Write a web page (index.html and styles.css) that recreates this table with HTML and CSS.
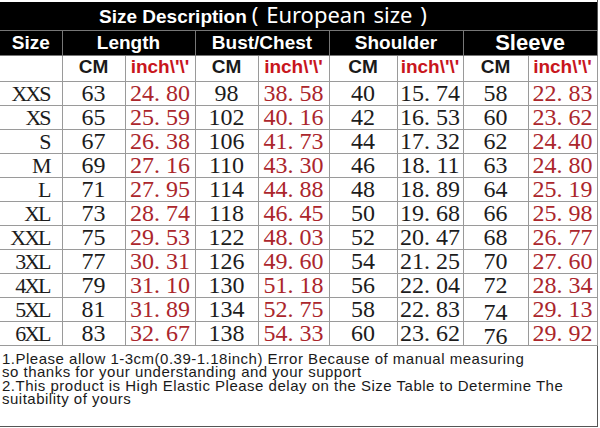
FILE: index.html
```html
<!DOCTYPE html>
<html>
<head>
<meta charset="utf-8">
<link rel="stylesheet" href="styles.css">
</head>
<body>
<div class="sheet">
<table class="chart">
<colgroup>
<col class="c0"><col class="c1"><col class="c2"><col class="c3"><col class="c4"><col class="c5"><col class="c6"><col class="c7"><col class="c8">
</colgroup>
<thead>
<tr class="title"><th colspan="9"><span class="t1">Size Description</span><span class="t2">( European size )</span></th></tr>
<tr class="head"><th>Size</th><th colspan="2">Length</th><th colspan="2">Bust/Chest</th><th colspan="2">Shoulder</th><th colspan="2" class="big">Sleeve</th></tr>
<tr class="units"><th></th><th>CM</th><th class="rd">inch\'\'</th><th>CM</th><th class="rd">inch\'\'</th><th>CM</th><th class="rd">inch\'\'</th><th>CM</th><th class="rd">inch\'\'</th></tr>
</thead>
<tbody>
<tr><td class="sz">XXS</td><td>63</td><td class="in">24<span class="dp">.</span>80</td><td>98</td><td class="in">38<span class="dp">.</span>58</td><td>40</td><td class="inb">15<span class="dp">.</span>74</td><td>58</td><td class="in">22<span class="dp">.</span>83</td></tr>
<tr><td class="sz">XS</td><td>65</td><td class="in">25<span class="dp">.</span>59</td><td>102</td><td class="in">40<span class="dp">.</span>16</td><td>42</td><td class="inb">16<span class="dp">.</span>53</td><td>60</td><td class="in">23<span class="dp">.</span>62</td></tr>
<tr><td class="sz">S</td><td>67</td><td class="in">26<span class="dp">.</span>38</td><td>106</td><td class="in">41<span class="dp">.</span>73</td><td>44</td><td class="inb">17<span class="dp">.</span>32</td><td>62</td><td class="in">24<span class="dp">.</span>40</td></tr>
<tr><td class="sz">M</td><td>69</td><td class="in">27<span class="dp">.</span>16</td><td>110</td><td class="in">43<span class="dp">.</span>30</td><td>46</td><td class="inb">18<span class="dp">.</span>11</td><td>63</td><td class="in">24<span class="dp">.</span>80</td></tr>
<tr><td class="sz">L</td><td>71</td><td class="in">27<span class="dp">.</span>95</td><td>114</td><td class="in">44<span class="dp">.</span>88</td><td>48</td><td class="inb">18<span class="dp">.</span>89</td><td>64</td><td class="in">25<span class="dp">.</span>19</td></tr>
<tr><td class="sz">XL</td><td>73</td><td class="in">28<span class="dp">.</span>74</td><td>118</td><td class="in">46<span class="dp">.</span>45</td><td>50</td><td class="inb">19<span class="dp">.</span>68</td><td>66</td><td class="in">25<span class="dp">.</span>98</td></tr>
<tr><td class="sz">XXL</td><td>75</td><td class="in">29<span class="dp">.</span>53</td><td>122</td><td class="in">48<span class="dp">.</span>03</td><td>52</td><td class="inb">20<span class="dp">.</span>47</td><td>68</td><td class="in">26<span class="dp">.</span>77</td></tr>
<tr><td class="sz">3XL</td><td>77</td><td class="in">30<span class="dp">.</span>31</td><td>126</td><td class="in">49<span class="dp">.</span>60</td><td>54</td><td class="inb">21<span class="dp">.</span>25</td><td>70</td><td class="in">27<span class="dp">.</span>60</td></tr>
<tr><td class="sz">4XL</td><td>79</td><td class="in">31<span class="dp">.</span>10</td><td>130</td><td class="in">51<span class="dp">.</span>18</td><td>56</td><td class="inb">22<span class="dp">.</span>04</td><td>72</td><td class="in">28<span class="dp">.</span>34</td></tr>
<tr><td class="sz">5XL</td><td>81</td><td class="in">31<span class="dp">.</span>89</td><td>134</td><td class="in">52<span class="dp">.</span>75</td><td>58</td><td class="inb">22<span class="dp">.</span>83</td><td><span class="low">74</span></td><td class="in">29<span class="dp">.</span>13</td></tr>
<tr><td class="sz">6XL</td><td>83</td><td class="in">32<span class="dp">.</span>67</td><td>138</td><td class="in">54<span class="dp">.</span>33</td><td>60</td><td class="inb">23<span class="dp">.</span>62</td><td><span class="low">76</span></td><td class="in">29<span class="dp">.</span>92</td></tr>
</tbody>
</table>
<div class="notes">
<p>1.Please allow 1-3cm(0.39-1.18inch) Error Because of manual measuring</p>
<p>so thanks for your understanding and your support</p>
<p>2.This product is High Elastic Please delay on the Size Table to Determine The</p>
<p>suitability of yours</p>
</div>
</div>
</body>
</html>
```
FILE: styles.css
```css
html, body {
  margin: 0;
  padding: 0;
  background: #fff;
}
.sheet {
  width: 598px;
  height: 427px;
  padding-top: 2px;
  box-sizing: border-box;
  border-right: 1px solid #555;
  border-bottom: 1px solid #555;
  display: flex;
  flex-direction: column;
}
.chart {
  width: 597px;
  table-layout: fixed;
  border-collapse: collapse;
}
.c0 { width: 62px; }
.c1 { width: 63px; }
.c2 { width: 70px; }
.c3 { width: 63px; }
.c4 { width: 71px; }
.c5 { width: 68px; }
.c6 { width: 66px; }
.c7 { width: 65px; }
.c8 { width: 69px; }
.chart th, .chart td {
  padding: 0;
  border: 1px solid #9a9a9a;
  white-space: nowrap;
}
.chart tr > :first-child {
  border-left: none;
}
.title th {
  background: #000;
  color: #fff;
  height: 26px;
  text-align: left;
  padding-left: 99px;
  border: none;
  border-bottom: 1px solid #777;
  line-height: 24px;
}
.t1 {
  font-family: "Liberation Sans", Arial, sans-serif;
  font-weight: bold;
  font-size: 19px;
  margin-right: 5px;
}
.t2 {
  font-family: "Noto Sans", "Open Sans", sans-serif;
  font-weight: normal;
  font-size: 22px;
  line-height: 24px;
  word-spacing: 2px;
}
.head th {
  background: #000;
  color: #fff;
  height: 24px;
  font-family: "Liberation Sans", Arial, sans-serif;
  font-weight: bold;
  font-size: 19px;
  line-height: 24px;
  border-color: #777;
  border-top: none;
}
.head th.big {
  font-size: 22px;
}
.units th {
  height: 25px;
  font-family: "Liberation Sans", Arial, sans-serif;
  font-weight: bold;
  font-size: 19px;
  line-height: 22px;
  vertical-align: top;
  color: #1a1a1a;
}
.units th.rd {
  color: #c8161d;
  border-left-color: #c9a3a3;
}
.chart td {
  height: 23px;
  font-family: "Liberation Serif", "Times New Roman", serif;
  font-size: 24px;
  line-height: 23px;
  text-align: center;
  color: #1c1c1c;
  vertical-align: middle;
}
.chart td.sz {
  text-align: right;
  padding-right: 12px;
  font-size: 22px;
  letter-spacing: -2px;
}
.chart td.in {
  color: #ab262c;
  border-left-color: #c9a3a3;
}
.chart td.inb {
  color: #1c1c1c;
}
.dp {
  margin-right: 6px;
}
.low {
  display: inline-block;
  line-height: 16px;
  vertical-align: -3px;
}
.notes {
  padding: 6px 0 0 2px;
  font-family: "Liberation Sans", Arial, sans-serif;
  font-size: 15px;
  letter-spacing: 0.5px;
  line-height: 13.4px;
  color: #1a1a1a;
}
.notes p {
  margin: 0;
  white-space: nowrap;
}
```
